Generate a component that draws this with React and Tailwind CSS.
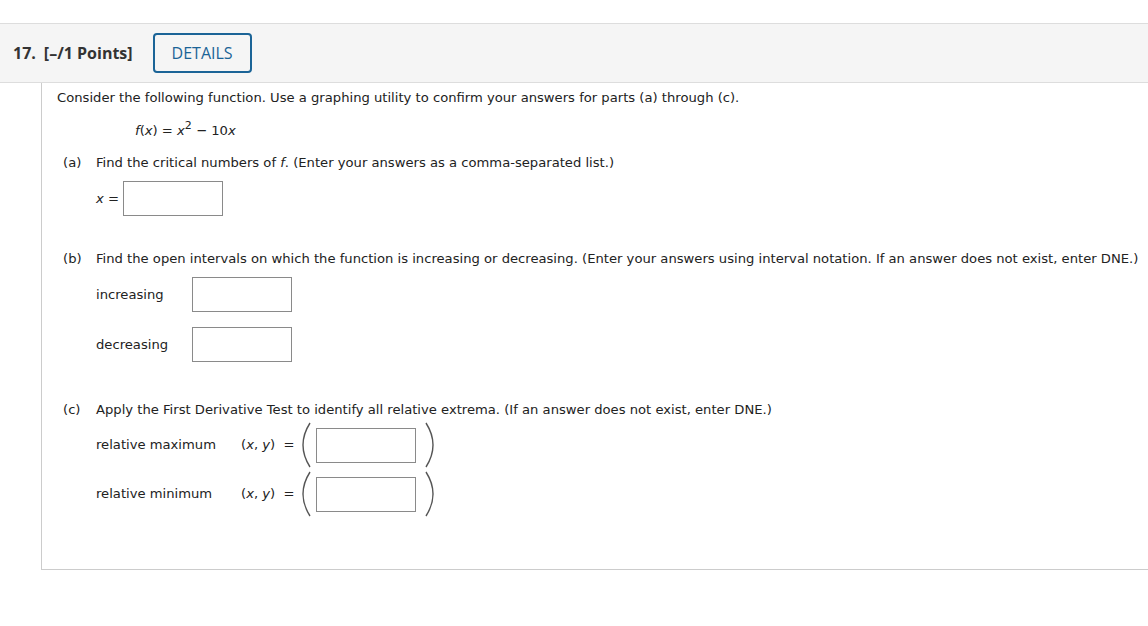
import React from "react";

const V = { fontFamily: '"DejaVu Sans", Verdana, sans-serif' };

function Box({ w = "w-[100px]", h = "h-[35px]" }) {
  return <div className={`${w} ${h} border border-[#8a8a8a] bg-white shrink-0`} />;
}

function Paren({ right }) {
  return (
    <svg width="12" height="46" viewBox="0 0 12 46" className="shrink-0">
      {right ? (
        <path d="M3 1 Q10 12 10 23 Q10 34 3 45" fill="none" stroke="#555" strokeWidth="1.4" />
      ) : (
        <path d="M9 1 Q2 12 2 23 Q2 34 9 45" fill="none" stroke="#555" strokeWidth="1.4" />
      )}
    </svg>
  );
}

function XY() {
  return (
    <span className="w-[60px] shrink-0">
      (<i>x</i>, <i>y</i>)&nbsp;&nbsp;=
    </span>
  );
}

export default function App() {
  return (
    <div className="w-[1148px] h-[626px] bg-white text-[#222] overflow-hidden">
      <div className="h-[23px]" />
      <div className="h-[60px] bg-[#f5f5f5] border-t border-b border-[#dddddd] flex items-center pl-[13px]" style={{ fontFamily: '"Open Sans", sans-serif' }}>
        <span className="text-[16px] font-bold text-[#333]">17.</span>
        <span className="text-[16px] font-bold text-[#333] ml-[8px]">[–/1 Points]</span>
        <div className="ml-[20px] w-[99px] h-[40px] border-2 border-[#1b6497] rounded-[4px] flex items-center justify-center text-[16px] text-[#1b6497]">
          DETAILS
        </div>
      </div>
      <div className="ml-[41px] border-l border-b border-[#cccccc] h-[487px] pl-[15px] pt-[7px] text-[13.15px] leading-[16px]" style={V}>
        <div>Consider the following function. Use a graphing utility to confirm your answers for parts (a) through (c).</div>
        <div className="mt-[17px] pl-[78px]">
          <i>f</i>(<i>x</i>) = <i>x</i>
          <sup className="text-[11px] relative top-[-6px]">2</sup> − 10<i>x</i>
        </div>
        <div className="mt-[16px] flex pl-[6px]">
          <span className="w-[33px]">(a)</span>
          <span>Find the critical numbers of <i>f</i>. (Enter your answers as a comma-separated list.)</span>
        </div>
        <div className="mt-[10px] flex items-center pl-[39px]">
          <span className="w-[27px]"><i>x</i> =</span>
          <Box />
        </div>
        <div className="mt-[35px] flex pl-[6px]">
          <span className="w-[33px]">(b)</span>
          <span>Find the open intervals on which the function is increasing or decreasing. (Enter your answers using interval notation. If an answer does not exist, enter DNE.)</span>
        </div>
        <div className="mt-[10px] flex items-center pl-[39px]">
          <span className="w-[96px]">increasing</span>
          <Box />
        </div>
        <div className="mt-[15px] flex items-center pl-[39px]">
          <span className="w-[96px]">decreasing</span>
          <Box />
        </div>
        <div className="mt-[40px] flex pl-[6px]">
          <span className="w-[33px]">(c)</span>
          <span>Apply the First Derivative Test to identify all relative extrema. (If an answer does not exist, enter DNE.)</span>
        </div>
        <div className="mt-[4px] flex items-center pl-[39px]">
          <span className="w-[145px]">relative maximum</span>
          <XY />
          <Paren />
          <div className="w-[3px]" />
          <Box h="h-[35px]" />
          <div className="w-[7px]" />
          <Paren right />
        </div>
        <div className="mt-[3px] flex items-center pl-[39px]">
          <span className="w-[145px]">relative minimum</span>
          <XY />
          <Paren />
          <div className="w-[3px]" />
          <Box h="h-[35px]" />
          <div className="w-[7px]" />
          <Paren right />
        </div>
      </div>
    </div>
  );
}
